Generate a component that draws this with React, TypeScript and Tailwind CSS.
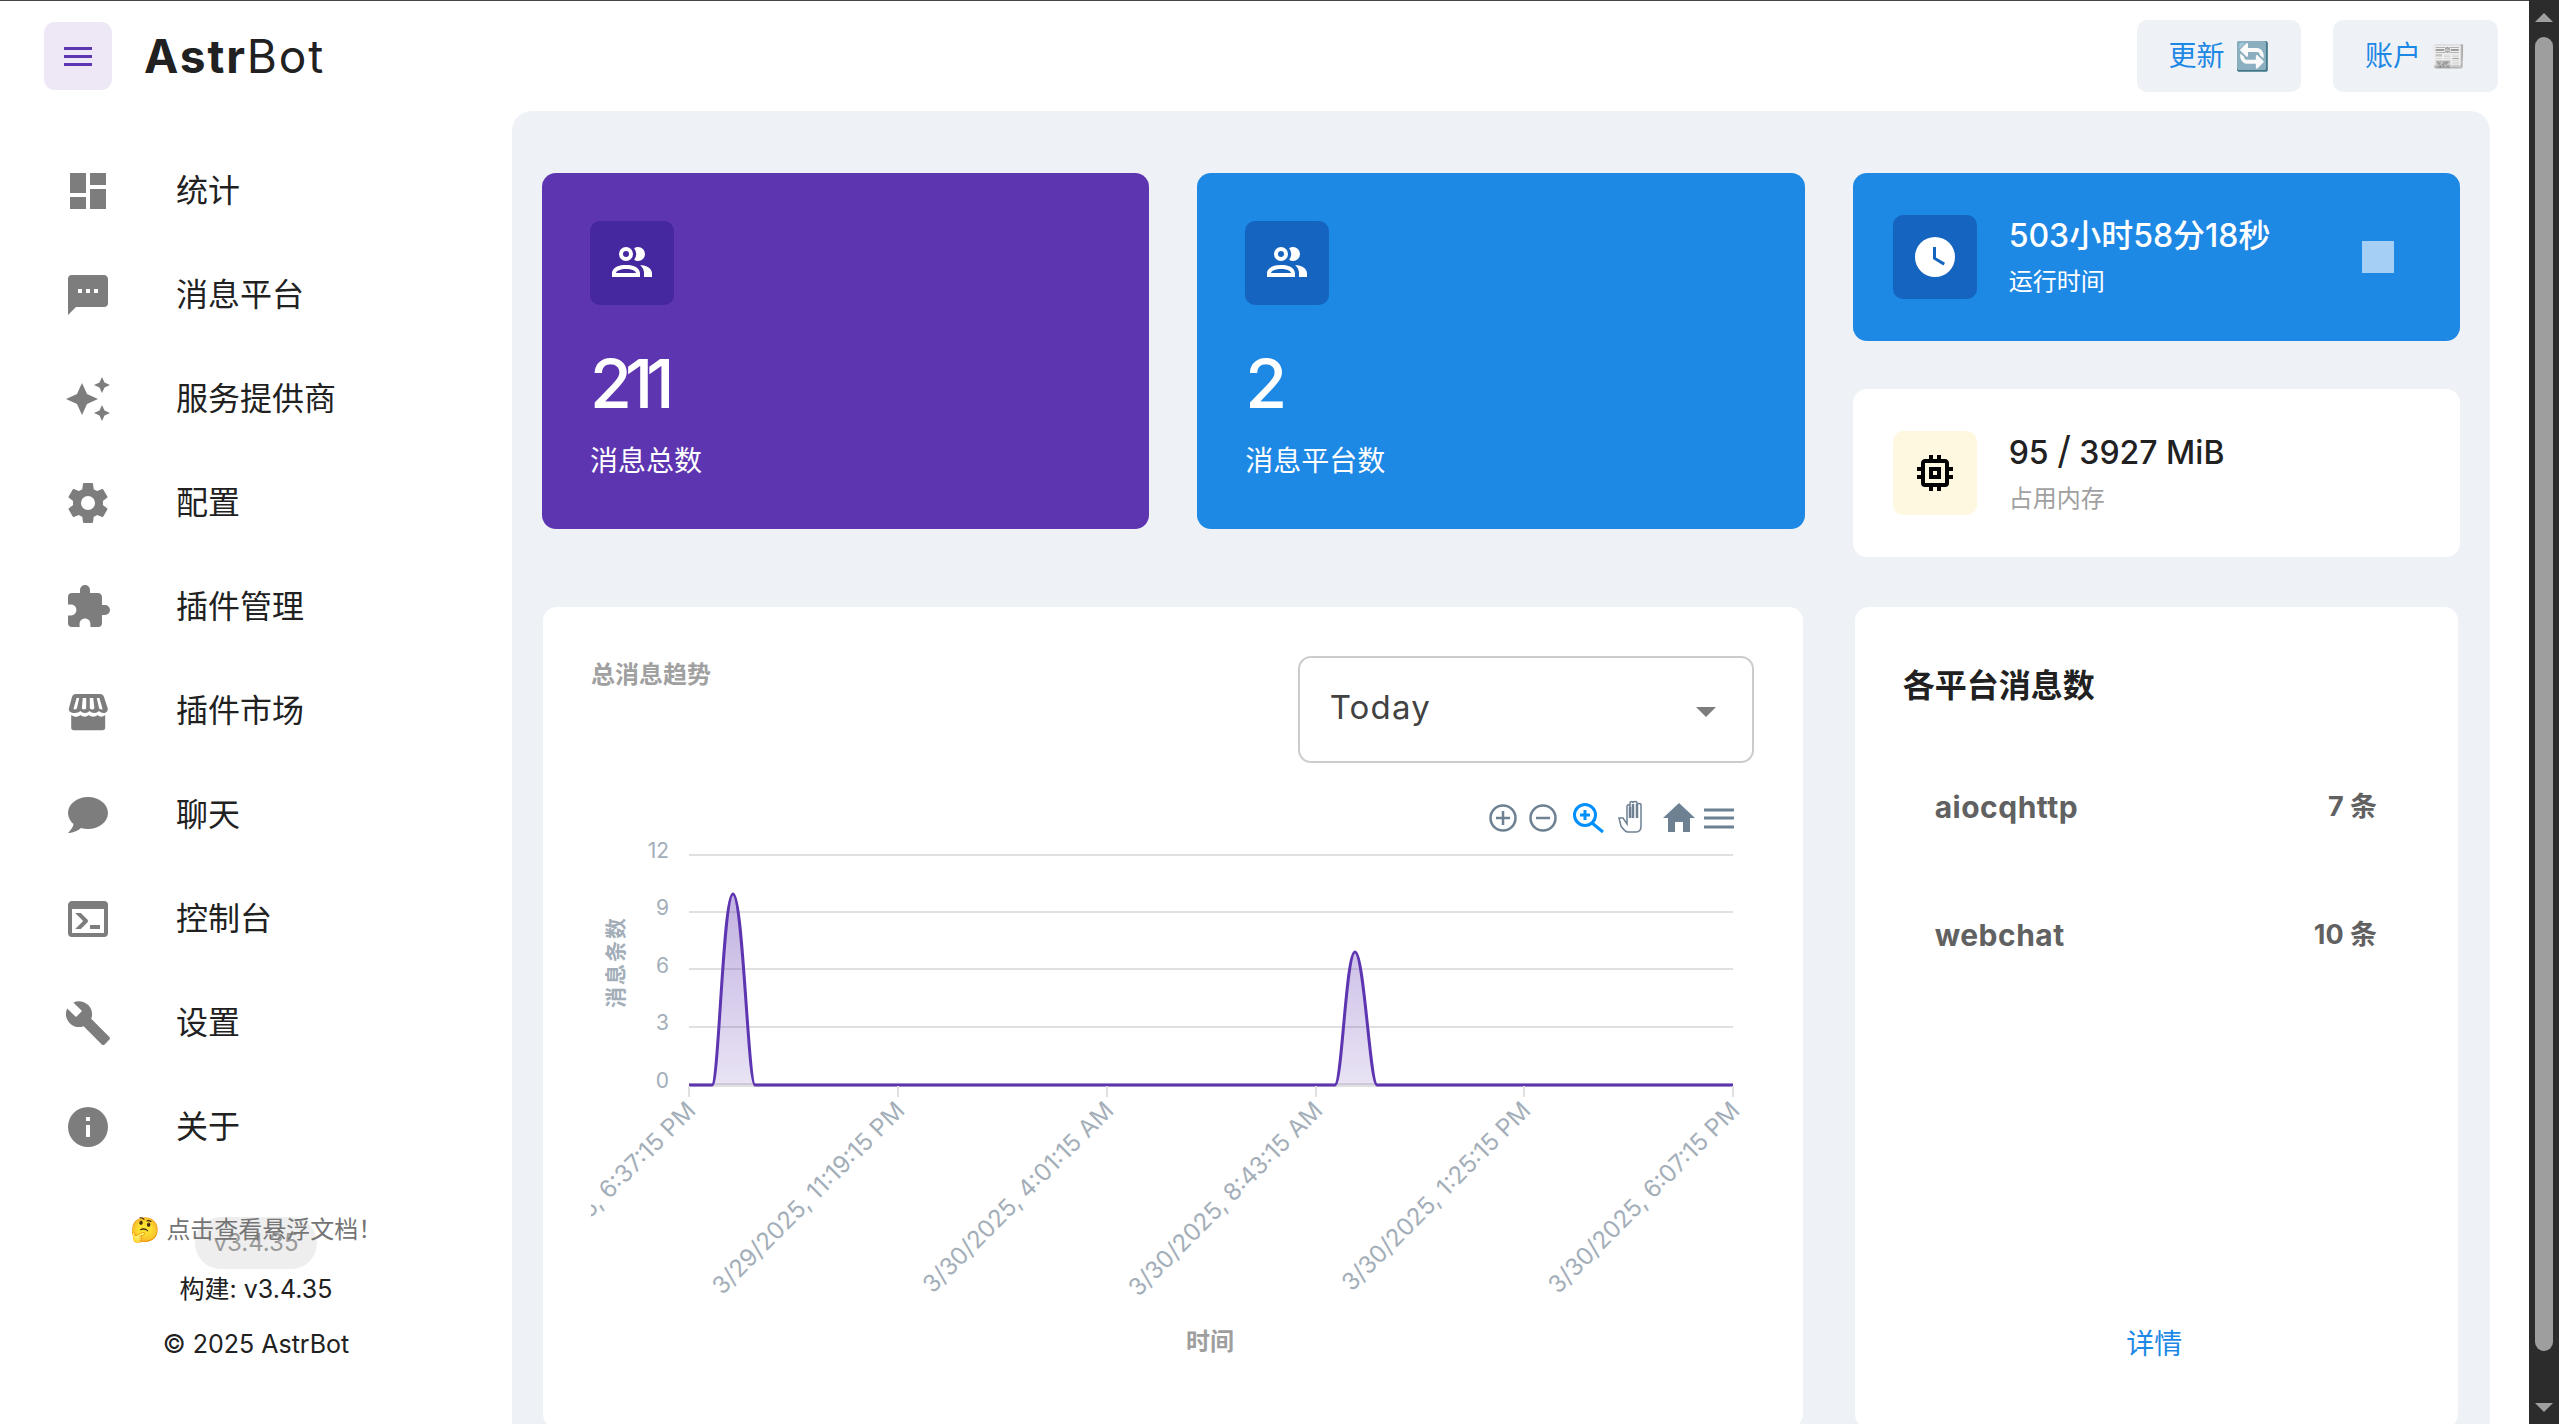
const navItems = [
  {
    label: "统计",
    d: "M13,3V9H21V3M13,21H21V11H13M3,21H11V15H3M3,13H11V3H3V13Z",
  },
  {
    label: "消息平台",
    d: "M20,2H4A2,2 0 0,0 2,4V22L6,18H20A2,2 0 0,0 22,16V4C22,2.89 21.1,2 20,2M17,11H15V9H17M13,11H11V9H13M9,11H7V9H9",
  },
  {
    label: "服务提供商",
    d: "M19,1L17.74,3.75L15,5L17.74,6.26L19,9L20.25,6.26L23,5L20.25,3.75M9,4L6.5,9.5L1,12L6.5,14.5L9,20L11.5,14.5L17,12L11.5,9.5M19,15L17.74,17.74L15,19L17.74,20.25L19,23L20.25,20.25L23,19L20.25,17.74",
  },
  {
    label: "配置",
    d: "M12,15.5A3.5,3.5 0 0,1 8.5,12A3.5,3.5 0 0,1 12,8.5A3.5,3.5 0 0,1 15.5,12A3.5,3.5 0 0,1 12,15.5M19.43,12.97C19.47,12.65 19.5,12.33 19.5,12C19.5,11.67 19.47,11.34 19.43,11L21.54,9.37C21.73,9.22 21.78,8.95 21.66,8.73L19.66,5.27C19.54,5.05 19.27,4.96 19.05,5.05L16.56,6.05C16.04,5.66 15.5,5.32 14.87,5.07L14.5,2.42C14.46,2.18 14.25,2 14,2H10C9.75,2 9.54,2.18 9.5,2.42L9.13,5.07C8.5,5.32 7.96,5.66 7.44,6.05L4.95,5.05C4.73,4.96 4.46,5.05 4.34,5.27L2.34,8.73C2.21,8.95 2.27,9.22 2.46,9.37L4.57,11C4.53,11.34 4.5,11.67 4.5,12C4.5,12.33 4.53,12.65 4.57,12.97L2.46,14.63C2.27,14.78 2.21,15.05 2.34,15.27L4.34,18.73C4.46,18.95 4.73,19.03 4.95,18.95L7.44,17.94C7.96,18.34 8.5,18.68 9.13,18.93L9.5,21.58C9.54,21.82 9.75,22 10,22H14C14.25,22 14.46,21.82 14.5,21.58L14.87,18.93C15.5,18.67 16.04,18.34 16.56,17.94L19.05,18.95C19.27,19.03 19.54,18.95 19.66,18.73L21.66,15.27C21.78,15.05 21.73,14.78 21.54,14.63L19.43,12.97Z",
  },
  {
    label: "插件管理",
    d: "M20.5,11H19V7C19,5.89 18.1,5 17,5H13V3.5A2.5,2.5 0 0,0 10.5,1A2.5,2.5 0 0,0 8,3.5V5H4A2,2 0 0,0 2,7V10.8H3.5C5,10.8 6.2,12 6.2,13.5C6.2,15 5,16.2 3.5,16.2H2V20A2,2 0 0,0 4,22H7.8V20.5C7.8,19 9,17.8 10.5,17.8C12,17.8 13.2,19 13.2,20.5V22H17A2,2 0 0,0 19,20V16H20.5A2.5,2.5 0 0,0 23,13.5A2.5,2.5 0 0,0 20.5,11Z",
  },
  {
    label: "插件市场",
    d: "M6,3.5H18C19,3.5 19.7,4 20,5L21.8,10.5C22.2,12 21,13 19.8,13C18.9,13 18.1,12.6 17.5,12C16.9,12.6 16.1,13 15.2,13C14.2,13 13.4,12.6 12.8,12C12.2,12.6 11.4,13 10.5,13C9.6,13 8.8,12.6 8.2,12C7.6,12.6 6.6,13 5.4,13C3.4,13 2,12 2.5,10.5L4,5C4.3,4 5,3.5 6,3.5M6.3,5.5L4.8,10.6C4.7,11 5,11.2 5.4,11.2C5.9,11.2 6.3,11 6.5,10.5L7.6,5.5H6.3M9.4,5.5L8.9,10.5C8.9,10.9 9.4,11.2 10,11.2C10.6,11.2 11.1,10.9 11.1,10.5L11.1,5.5H9.4M12.9,5.5V10.5C12.9,10.9 13.4,11.2 14.1,11.2C14.7,11.2 15.2,10.9 15.2,10.5L14.6,5.5H12.9M16.4,5.5L17.5,10.5C17.7,11 18.2,11.2 18.7,11.2C19.1,11.2 19.3,11 19.2,10.6L17.7,5.5H16.4M3.6,14C5.4,15.3 7,15.1 8.2,14C9.4,15.1 11.1,15.1 12.4,14C13.6,15.1 15.6,15.1 16.8,14C18,15.1 19.2,15.2 20.6,14V20.5C20.6,21.2 20,21.6 19.4,21.6H4.8C4.2,21.6 3.6,21.2 3.6,20.5V14Z",
  },
  {
    label: "聊天",
    d: "M12,3C17.5,3 22,6.58 22,11C22,15.42 17.5,19 12,19C10.76,19 9.57,18.82 8.47,18.5C5.55,21 2,21 2,21C4.33,18.67 4.7,17.1 4.75,16.5C3.05,15.07 2,13.13 2,11C2,6.58 6.5,3 12,3Z",
  },
  {
    label: "控制台",
    d: "M20,19V7H4V19H20M20,3A2,2 0 0,1 22,5V19A2,2 0 0,1 20,21H4A2,2 0 0,1 2,19V5C2,3.89 2.9,3 4,3H20M13,17V15H18V17H13M9.58,13L5.57,9H8.4L11.7,12.3C12.09,12.69 12.09,13.33 11.7,13.72L8.42,17H5.59L9.58,13Z",
  },
  {
    label: "设置",
    d: "M22.7,19L13.6,9.9C14.5,7.6 14,4.9 12.1,3C10.1,1 7.1,0.6 4.7,1.7L9,6L6,9L1.6,4.7C0.4,7.1 0.9,10.1 2.9,12.1C4.8,14 7.5,14.5 9.8,13.6L18.9,22.7C19.3,23.1 19.9,23.1 20.3,22.7L22.6,20.4C23.1,20 23.1,19.3 22.7,19Z",
  },
  {
    label: "关于",
    d: "M13,9H11V7H13M13,17H11V11H13M12,2A10,10 0 0,0 2,12A10,10 0 0,0 12,22A10,10 0 0,0 22,12A10,10 0 0,0 12,2Z",
  },
]

const peopleIcon =
  "M13.07 10.41A5 5 0 0 0 13.07 4.59A3.39 3.39 0 0 1 15 4A3.5 3.5 0 0 1 15 11A3.39 3.39 0 0 1 13.07 10.41M5.5 7.5A3.5 3.5 0 1 1 9 11A3.5 3.5 0 0 1 5.5 7.5M7.5 7.5A1.5 1.5 0 1 0 9 6A1.5 1.5 0 0 0 7.5 7.5M16 17V19H2V17S2 13 9 13 16 17 16 17M14 17C13.86 16.22 12.67 15 9 15S4.07 16.29 4 17M15.95 13A5.32 5.32 0 0 1 18 17V19H22V17S22 13.37 15.94 13Z"
const clockIcon =
  "M12,2A10,10 0 0,0 2,12A10,10 0 0,0 12,22A10,10 0 0,0 22,12A10,10 0 0,0 12,2M16.2,16.2L11,13V7H12.5V12.2L17,14.9L16.2,16.2Z"
const memoryIcon =
  "M17,17H7V7H17M21,11V9H19V7C19,5.89 18.1,5 17,5H15V3H13V5H11V3H9V5H7C5.89,5 5,5.89 5,7V9H3V11H5V13H3V15H5V17A2,2 0 0,0 7,19H9V21H11V19H13V21H15V19H17A2,2 0 0,0 19,17V15H21V13H19V11M13,13H11V11H13M15,9H9V15H15V9Z"

const yTicks = [
  { label: "12", grid: 855, text: 858 },
  { label: "9", grid: 912, text: 915 },
  { label: "6", grid: 969, text: 973 },
  { label: "3", grid: 1027, text: 1030 },
  { label: "0", grid: 1084, text: 1088 },
]

const xTicks = [
  { x: 689, label: "3/29/2025, 6:37:15 PM" },
  { x: 898, label: "3/29/2025, 11:19:15 PM" },
  { x: 1107, label: "3/30/2025, 4:01:15 AM" },
  { x: 1316, label: "3/30/2025, 8:43:15 AM" },
  { x: 1524, label: "3/30/2025, 1:25:15 PM" },
  { x: 1733, label: "3/30/2025, 6:07:15 PM" },
]

const platforms = [
  { name: "aiocqhttp", count: "7 条" },
  { name: "webchat", count: "10 条" },
]

const linePath =
  "M689 1085H712C719 1085 723 894 733 894C743 894 748 1085 755 1085H1335C1342 1085 1346 952 1355 952C1364 952 1370 1085 1377 1085H1733"

function Icon({ d, className }: { d: string; className: string }) {
  return (
    <svg viewBox="0 0 24 24" className={className} fill="currentColor" fillRule="evenodd">
      <path d={d} />
    </svg>
  )
}

function Sidebar() {
  return (
    <aside className="w-[512px] shrink-0 pt-[28px]">
      {navItems.map((item) => (
        <div key={item.label} className="flex h-[104px] items-center gap-16 pl-16">
          <Icon d={item.d} className="h-12 w-12 text-[#7d7d7d]" />
          <span className="text-[32px] text-[#212121]">{item.label}</span>
        </div>
      ))}
      <div className="relative mt-[38px] flex flex-col items-center">
        <div className="flex h-[52px] w-[122px] items-center justify-center rounded-[26px] bg-[#eeeeee] text-[24px] text-[#9a9a9a]">
          v3.4.35
        </div>
        <div className="absolute left-0 right-0 top-0 text-center text-[24px] leading-[26px] text-[#757575]">
          🤔 点击查看悬浮文档！
        </div>
        <div className="text-[25px] leading-[40px] text-[#212121]">构建: v3.4.35</div>
        <div className="mt-[15px] text-[25px] leading-[40px] text-[#212121]">© 2025 AstrBot</div>
      </div>
    </aside>
  )
}

function StatCard({ value, label, bg, box }: { value: string; label: string; bg: string; box: string }) {
  return (
    <div className={`h-[356px] rounded-[14px] p-12 text-white ${bg}`}>
      <div className={`flex h-[84px] w-[84px] items-center justify-center rounded-[10px] ${box}`}>
        <Icon d={peopleIcon} className="h-12 w-12" />
      </div>
      <div className="mt-[40px] text-[68px] font-medium leading-[76px] tracking-[-7px]">{value}</div>
      <div className="mt-5 text-[28px] leading-[40px]">{label}</div>
    </div>
  )
}

function Toolbar() {
  return (
    <g fill="none" stroke="#6e8192">
      <circle cx="1503" cy="818" r="12.5" strokeWidth="2.5" />
      <path d="M1496 818H1510M1503 811V825" strokeWidth="2.5" />
      <circle cx="1543" cy="818" r="12.5" strokeWidth="2.5" />
      <path d="M1536 818H1550" strokeWidth="2.5" />
      <circle cx="1585" cy="815" r="10.5" stroke="#008ffb" strokeWidth="3" />
      <path d="M1580 815H1590M1585 810V820M1592 823L1603 832" stroke="#008ffb" strokeWidth="3" />
      <path
        d="M1619 818L1623 818L1627 824V807C1627 804 1630 804 1630 807V803C1630 801 1633 801 1633 803V803C1633 801 1637 801 1637 803V805C1637 803 1641 803 1641 805V826C1641 830 1639 832 1636 832H1628C1625 832 1623 829 1621 826Z"
        strokeWidth="1.5"
        fill="#fff"
      />
      <path d="M1630 807V818M1633 804V818M1637 804V818" strokeWidth="2.5" />
      <path
        d="M1663 818L1679 803L1695 818H1690V832H1683V822H1675V832H1668V818Z"
        fill="#6e8192"
        stroke="none"
      />
      <path d="M1704 810H1734M1704 818H1734M1704 827H1734" strokeWidth="3" />
    </g>
  )
}

function TrendChart() {
  return (
    <svg viewBox="591 800 1169 560" className="mt-[37px] h-[560px] w-[1169px]">
      <defs>
        <linearGradient id="area" gradientUnits="userSpaceOnUse" x1="0" y1="892" x2="0" y2="1084">
          <stop offset="0" stopColor="#5e35b1" stopOpacity="0.38" />
          <stop offset="1" stopColor="#5e35b1" stopOpacity="0.14" />
        </linearGradient>
      </defs>
      <Toolbar />
      {yTicks.map((t) => (
        <g key={t.label}>
          <line x1="689" x2="1733" y1={t.grid} y2={t.grid} stroke="#e0e0e0" strokeWidth="2" />
          <text x="669" y={t.text} textAnchor="end" fontSize="21" fill="#a3aeb8">
            {t.label}
          </text>
        </g>
      ))}
      <line x1="689" x2="1733" y1="1086" y2="1086" stroke="#e0e0e0" strokeWidth="2" />
      <path d={`${linePath}Z`} fill="url(#area)" />
      <path d={linePath} fill="none" stroke="#5e35b1" strokeWidth="3" />
      {xTicks.map((t) => (
        <g key={t.x}>
          <line x1={t.x} x2={t.x} y1="1086" y2="1097" stroke="#e0e0e0" strokeWidth="2" />
          <text
            x={t.x + 8}
            y="1112"
            textAnchor="end"
            fontSize="24"
            fill="#a3aeb8"
            transform={`rotate(-45 ${t.x + 8} 1112)`}
          >
            {t.label}
          </text>
        </g>
      ))}
      <text
        x="623"
        y="962"
        textAnchor="middle"
        fontSize="21"
        fontWeight="700"
        letterSpacing="2"
        fill="#a3aeb8"
        transform="rotate(-90 623 962)"
      >
        消息条数
      </text>
      <text x="1210" y="1350" textAnchor="middle" fontSize="24" fontWeight="700" fill="#9e9e9e">
        时间
      </text>
    </svg>
  )
}

export default function App() {
  return (
    <div className="flex h-screen overflow-hidden bg-white font-['Inter','Noto_Sans_CJK_SC',sans-serif]">
      <div className="flex min-w-0 flex-1 flex-col">
        <div className="h-px shrink-0 bg-[#444444]" />
        <header className="flex h-[110px] shrink-0 items-center pl-[44px] pr-[31px]">
          <button className="flex h-[68px] w-[68px] items-center justify-center rounded-[11px] bg-[#ede7f6]">
            <svg viewBox="0 0 28 19" className="h-[19px] w-7" fill="#5e35b1">
              <rect x="0" y="0" width="28" height="3" />
              <rect x="0" y="8" width="28" height="3" />
              <rect x="0" y="16" width="28" height="3" />
            </svg>
          </button>
          <div className="ml-8 text-[46px] tracking-[1.9px] text-[#212121]">
            <span className="font-bold">Astr</span>
            <span>Bot</span>
          </div>
          <div className="ml-auto flex gap-8">
            <button className="flex h-[72px] w-[164px] items-center justify-center gap-[10px] rounded-[10px] bg-[#eef2f6] text-[28px] text-[#1e88e5]">
              更新 <span>🔄</span>
            </button>
            <button className="flex h-[72px] w-[165px] items-center justify-center gap-[10px] rounded-[10px] bg-[#eef2f6] text-[28px] text-[#1e88e5]">
              账户 <span>📰</span>
            </button>
          </div>
        </header>
        <div className="flex min-h-0 flex-1">
          <Sidebar />
          <main className="mr-[39px] min-w-0 flex-1 rounded-t-[20px] bg-[#eef2f6] px-[30px] pt-[62px]">
            <div className="grid grid-cols-3 gap-x-12">
              <StatCard value="211" label="消息总数" bg="bg-[#5e35b1]" box="bg-[#4527a0]" />
              <StatCard value="2" label="消息平台数" bg="bg-[#1e88e5]" box="bg-[#1565c0]" />
              <div className="flex flex-col gap-12">
                <div className="flex h-[168px] items-center rounded-[14px] bg-[#1e88e5] pl-10 text-white">
                  <div className="flex h-[84px] w-[84px] items-center justify-center rounded-[10px] bg-[#1565c0]">
                    <Icon d={clockIcon} className="h-12 w-12" />
                  </div>
                  <div className="ml-8">
                    <div className="text-[32px] font-medium leading-[40px]">503小时58分18秒</div>
                    <div className="mt-[9px] text-[24px] leading-[34px]">运行时间</div>
                  </div>
                  <div className="ml-auto mr-[66px] h-8 w-8 bg-white/60" />
                </div>
                <div className="flex h-[168px] items-center rounded-[14px] bg-white pl-10">
                  <div className="flex h-[84px] w-[84px] items-center justify-center rounded-[10px] bg-[#fff8e1]">
                    <Icon d={memoryIcon} className="h-12 w-12 text-black" />
                  </div>
                  <div className="ml-8">
                    <div className="text-[32px] font-medium leading-[40px] text-[#212121]">
                      95 <span className="text-[38px] font-normal">/</span> 3927 MiB
                    </div>
                    <div className="mt-[9px] text-[24px] leading-[34px] text-[#a0a0a0]">占用内存</div>
                  </div>
                </div>
              </div>
            </div>
            <div className="mt-[50px] grid grid-cols-3 gap-x-12">
              <div className="col-span-2 ml-px mr-[2px] h-[821px] rounded-[14px] bg-white pl-12 pr-[49px] pt-[49px]">
                <div className="flex justify-between">
                  <div className="mt-[2px] text-[24px] font-bold leading-[34px] text-[#a0a0a0]">总消息趋势</div>
                  <div className="flex h-[107px] w-[456px] items-center justify-between rounded-[13px] border-2 border-[#cccccc] pl-[30px] pr-9 pb-[4px]">
                    <span className="text-[33px] tracking-[1.2px] text-[#424242]">Today</span>
                    <svg viewBox="0 0 20 10" className="mt-[8px] h-[10px] w-5" fill="#7d7d7d">
                      <path d="M0 0H20L10 10Z" />
                    </svg>
                  </div>
                </div>
                <TrendChart />
              </div>
              <div className="mx-[2px] flex h-[821px] flex-col rounded-[14px] bg-white pb-14 pt-[49px]">
                <div className="pl-12 text-[32px] font-bold leading-[60px] text-[#212121]">各平台消息数</div>
                <div className="mt-[27px]">
                  {platforms.map((p) => (
                    <div
                      key={p.name}
                      className="flex h-[128px] items-center justify-between pl-20 pr-[81px] font-bold text-[#616161]"
                    >
                      <span className="text-[30px] tracking-[0.5px]">{p.name}</span>
                      <span className="text-[27px]">{p.count}</span>
                    </div>
                  ))}
                </div>
                <div className="mt-auto pr-[4px] text-center text-[28px] leading-[56px] text-[#1e88e5]">详情</div>
              </div>
            </div>
          </main>
        </div>
      </div>
      <div className="flex w-[30px] shrink-0 flex-col items-center bg-[#2c2c2c]">
        <svg viewBox="0 0 18 9" className="mt-[13px] h-[9px] w-[18px]" fill="#a0a0a0">
          <path d="M9 0L18 9H0Z" />
        </svg>
        <div className="mt-[15px] h-[1314px] w-[18px] rounded-[9px] bg-[#9e9e9e]" />
        <svg viewBox="0 0 18 9" className="mt-[52px] h-[9px] w-[18px]" fill="#a0a0a0">
          <path d="M0 0H18L9 9Z" />
        </svg>
      </div>
    </div>
  )
}
